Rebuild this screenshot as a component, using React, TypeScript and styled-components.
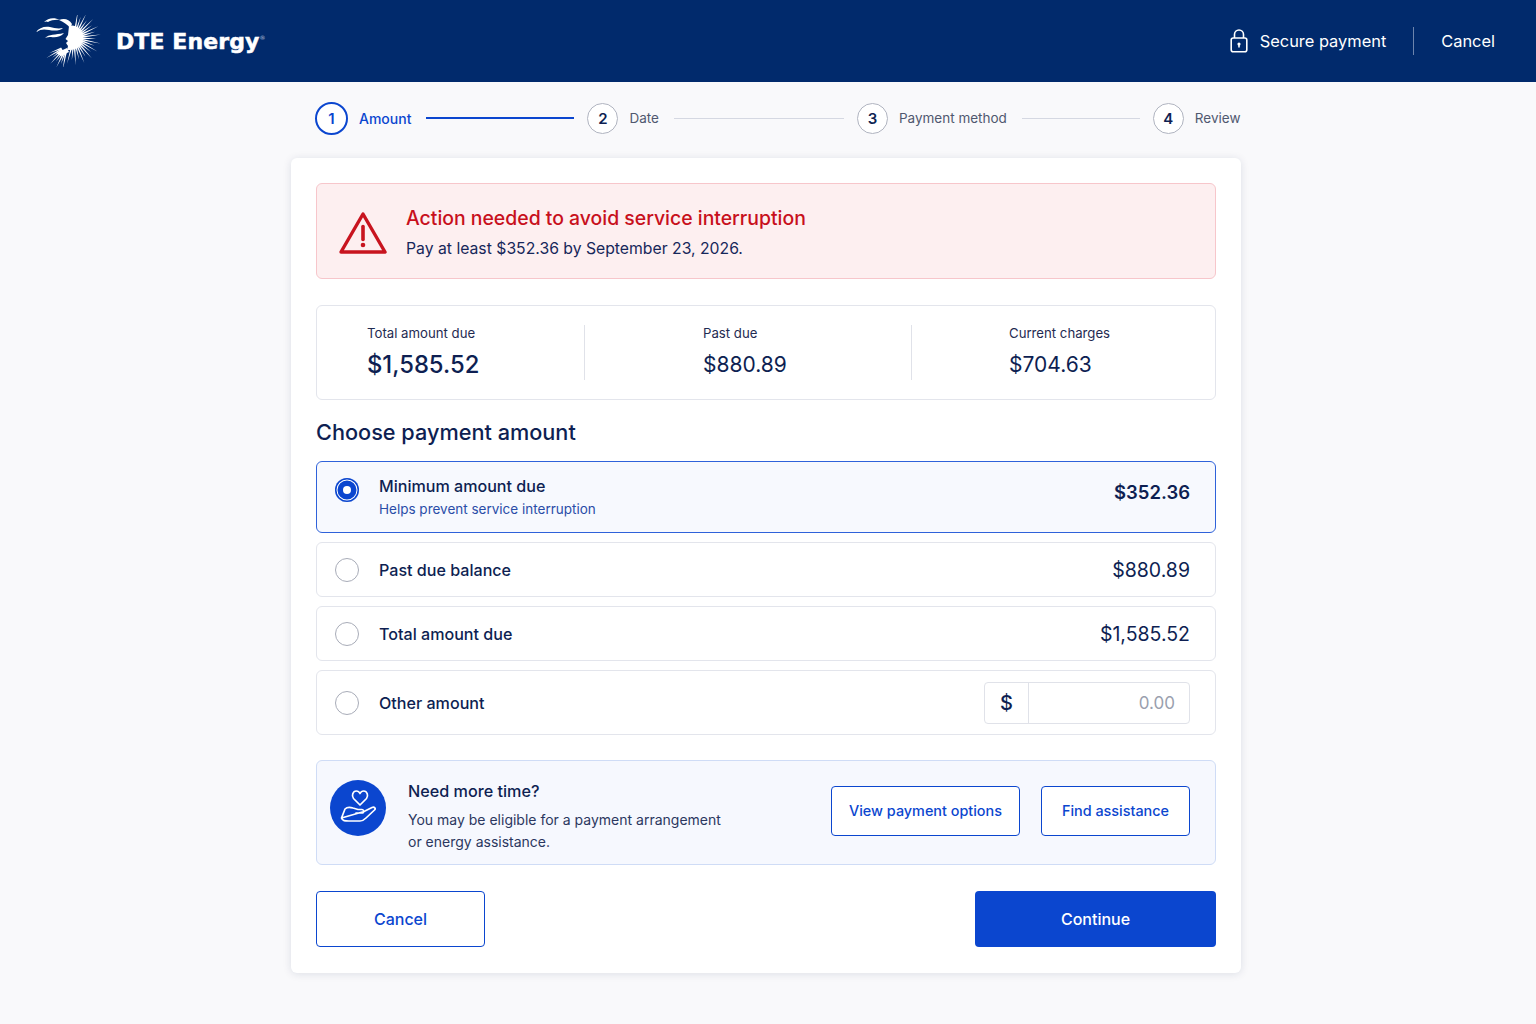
import React from "react";
import styled, { createGlobalStyle } from "styled-components";

const GlobalStyle = createGlobalStyle`
  html, body {
    margin: 0;
    padding: 0;
    background: #f9f9fb;
    font-family: "Inter", "Liberation Sans", sans-serif;
    color: #0e1f52;
  }
  * { box-sizing: border-box; }
`;

const Page = styled.div`
  width: 1536px;
  height: 1024px;
  overflow: hidden;
  display: flex;
  flex-direction: column;
  align-items: center;
`;

const Header = styled.header`
  width: 100%;
  height: 82px;
  flex: none;
  background: #012a6c;
  display: flex;
  align-items: center;
  justify-content: space-between;
  padding: 0 41px 0 36px;
  color: #fff;
`;

const Brand = styled.div`
  display: flex;
  align-items: center;
  gap: 13px;
`;

const BrandName = styled.span`
  font-family: "DejaVu Sans", sans-serif;
  font-weight: 700;
  font-size: 22px;
  letter-spacing: 0.1px;
  -webkit-text-stroke: 0.5px #fff;
  sup {
    font-size: 6px;
    font-weight: 400;
    -webkit-text-stroke: 0;
    color: #b8c4da;
    vertical-align: 9px;
    line-height: 0;
  }
`;

const HeaderActions = styled.div`
  display: flex;
  align-items: center;
  font-size: 16.4px;
`;

const SecureNote = styled.div`
  display: flex;
  align-items: center;
  gap: 12px;
  padding-right: 27px;
  border-right: 1px solid #6c84ad;
  height: 28px;
`;

const HeaderCancel = styled.span`
  padding-left: 27px;
`;

const Stepper = styled.nav`
  width: 924px;
  height: 72px;
  flex: none;
  margin: 0 0 4px 18px;
  display: flex;
  align-items: center;
`;

const StepCircle = styled.span<{ $active?: boolean }>`
  flex: none;
  width: ${p => (p.$active ? 33 : 31)}px;
  height: ${p => (p.$active ? 33 : 31)}px;
  border-radius: 50%;
  border: ${p => (p.$active ? "2px solid #0b46cf" : "1.5px solid #b0b4c0")};
  color: ${p => (p.$active ? "#0b46cf" : "#0e1f52")};
  background: #fff;
  display: flex;
  align-items: center;
  justify-content: center;
  font-size: 15px;
  font-weight: 600;
`;

const StepLabel = styled.span<{ $active?: boolean }>`
  flex: none;
  margin-left: 11px;
  font-size: ${p => (p.$active ? 14 : 13.5)}px;
  font-weight: ${p => (p.$active ? 500 : 400)};
  color: ${p => (p.$active ? "#0b46cf" : "#50586f")};
`;

const StepLine = styled.span<{ $active?: boolean; $width: number }>`
  flex: none;
  width: ${p => p.$width}px;
  height: ${p => (p.$active ? 1.5 : 1)}px;
  margin: 0 13px 0 15px;
  background: ${p => (p.$active ? "#0b46cf" : "#d5d8e2")};
`;

const Card = styled.main`
  width: 950px;
  height: 815px;
  flex: none;
  margin-right: 4px;
  background: #fff;
  border-radius: 6px;
  box-shadow: 0 1px 8px rgba(20, 30, 70, 0.12);
  padding: 25px;
  display: flex;
  flex-direction: column;
`;

const Alert = styled.section`
  height: 96px;
  flex: none;
  display: flex;
  align-items: center;
  gap: 19px;
  padding: 3px 22px 0;
  background: #fdeff0;
  border: 1px solid #f7c6cb;
  border-radius: 6px;
`;

const AlertText = styled.div`
  display: flex;
  flex-direction: column;
  gap: 9px;
`;

const AlertTitle = styled.div`
  color: #c8101c;
  font-size: 19.4px;
  font-weight: 500;
  line-height: 24px;
`;

const AlertBody = styled.div`
  font-size: 15.75px;
  line-height: 20px;
  color: #17275a;
`;

const Summary = styled.section`
  margin-top: 26px;
  height: 95px;
  flex: none;
  display: grid;
  grid-template-columns: 268px 327px 1fr;
  align-items: center;
  border: 1px solid #e3e5ec;
  border-radius: 6px;
`;

const SummaryCell = styled.div<{ $inset: number; $divider?: boolean }>`
  height: 55px;
  padding-left: ${p => p.$inset}px;
  border-right: ${p => (p.$divider ? "1px solid #e0e2e9" : "none")};
  display: flex;
  flex-direction: column;
  justify-content: space-between;
`;

const SummaryLabel = styled.div`
  font-size: 13.2px;
  line-height: 17px;
  color: #1f2b52;
`;

const SummaryValue = styled.div<{ $large?: boolean }>`
  font-size: ${p => (p.$large ? 23.8 : 21)}px;
  font-weight: ${p => (p.$large ? 500 : 400)};
  line-height: 30px;
  color: #0e1f52;
`;

const Heading = styled.h2`
  margin: 19px 0 15px;
  font-size: 21.7px;
  font-weight: 500;
  line-height: 27px;
  color: #0e1f52;
`;

const Options = styled.div`
  display: flex;
  flex-direction: column;
  gap: 9px;
`;

const Option = styled.label<{ $height: number; $selected?: boolean }>`
  height: ${p => p.$height}px;
  display: flex;
  align-items: center;
  padding: 0 25px 0 18px;
  border-radius: 6px;
  border: 1px solid ${p => (p.$selected ? "#2f62da" : "#e3e5ec")};
  background: ${p => (p.$selected ? "#f7f9fe" : "#fff")};
`;

const Radio = styled.span<{ $selected?: boolean }>`
  flex: none;
  width: 24px;
  height: 24px;
  margin-right: 20px;
  margin-top: ${p => (p.$selected ? -14 : 0)}px;
  border-radius: 50%;
  background: ${p => (p.$selected ? "#0b46cf" : "#fff")};
  border: ${p => (p.$selected ? "none" : "1.5px solid #a8acb8")};
  display: flex;
  align-items: center;
  justify-content: center;
  box-shadow: ${p => (p.$selected ? "inset 0 0 0 1.5px #0b46cf, inset 0 0 0 2.5px #fff" : "none")};
  &::after {
    content: "";
    display: ${p => (p.$selected ? "block" : "none")};
    width: 8px;
    height: 8px;
    border-radius: 50%;
    background: #fff;
  }
`;

const OptionText = styled.div`
  flex: 1;
`;

const OptionName = styled.div`
  font-size: 16.1px;
  font-weight: 500;
  line-height: 20px;
  color: #0e1f52;
`;

const OptionHint = styled.div`
  margin-top: 4px;
  font-size: 13.5px;
  line-height: 18px;
  color: #2a4da8;
`;

const OptionAmount = styled.div<{ $strong?: boolean }>`
  margin-top: ${p => (p.$strong ? -10 : 0)}px;
  font-size: ${p => (p.$strong ? 18.5 : 19.5)}px;
  font-weight: ${p => (p.$strong ? 600 : 400)};
  color: #0e1f52;
`;

const AmountField = styled.div`
  width: 206px;
  height: 42px;
  display: flex;
  border: 1px solid #e0e2e9;
  border-radius: 4px;
`;

const AmountPrefix = styled.span`
  width: 44px;
  flex: none;
  display: flex;
  align-items: center;
  justify-content: center;
  border-right: 1px solid #e0e2e9;
  font-size: 20px;
  font-weight: 500;
  color: #0e1f52;
`;

const AmountInput = styled.span`
  flex: 1;
  display: flex;
  align-items: center;
  justify-content: flex-end;
  padding-right: 14px;
  font-size: 17px;
  color: #9a9fae;
`;

const HelpBox = styled.section`
  margin-top: 25px;
  height: 105px;
  flex: none;
  display: flex;
  align-items: center;
  padding: 0 25px 0 13px;
  background: #f6f8fe;
  border: 1px solid #cfdcf6;
  border-radius: 6px;
`;

const HelpIcon = styled.span`
  flex: none;
  width: 56px;
  height: 56px;
  margin-top: -10px;
  border-radius: 50%;
  background: #0b46cf;
  display: flex;
  align-items: center;
  justify-content: center;
`;

const HelpText = styled.div`
  flex: 1;
  margin-left: 22px;
  padding-top: 8px;
`;

const HelpTitle = styled.div`
  font-size: 16.2px;
  font-weight: 500;
  line-height: 20px;
  margin-bottom: 8px;
  color: #0e1f52;
`;

const HelpBody = styled.div`
  font-size: 14px;
  line-height: 22px;
  color: #2b3760;
`;

const OutlineButton = styled.button<{ $width: number; $height: number; $size: number }>`
  width: ${p => p.$width}px;
  height: ${p => p.$height}px;
  flex: none;
  background: #fff;
  border: 1px solid #0b46cf;
  border-radius: 4px;
  color: #0b46cf;
  font-family: inherit;
  font-size: ${p => p.$size}px;
  font-weight: 500;
  padding: 0;
`;

const HelpActions = styled.div`
  display: flex;
  gap: 21px;
  margin-top: -4px;
`;

const Footer = styled.footer`
  margin-top: 26px;
  display: flex;
  justify-content: space-between;
`;

const PrimaryButton = styled.button`
  width: 241px;
  height: 56px;
  background: #0b46cf;
  border: none;
  border-radius: 4px;
  color: #fff;
  font-family: inherit;
  font-size: 16px;
  font-weight: 500;
  padding: 0;
`;

// sun rays of the logo, fanned around a centre
const fan = (cx: number, cy: number, from: number, to: number, count: number, long: number, short: number, inner: number) =>
  Array.from({ length: count }, (_, i) => {
    const a = ((from + (i * (to - from)) / (count - 1)) * Math.PI) / 180;
    const len = i % 2 === 0 ? long : short;
    const perp = a + Math.PI / 2;
    const w = 0.95;
    const x0 = cx + inner * Math.cos(a);
    const y0 = cy + inner * Math.sin(a);
    return [
      [x0 + w * Math.cos(perp), y0 + w * Math.sin(perp)],
      [cx + len * Math.cos(a), cy + len * Math.sin(a)],
      [x0 - w * Math.cos(perp), y0 - w * Math.sin(perp)],
    ]
      .map(pt => pt.map(n => n.toFixed(1)).join(","))
      .join(" ");
  });

const rays = [...fan(38, 23, -82, 105, 21, 27, 22, 7), ...fan(31, 31, 100, 158, 8, 24, 19, 6)];

const BrandMark = () => (
  <svg width="67" height="52" viewBox="0 0 67 52" fill="#fff">
    {rays.map(points => (
      <polygon key={points} points={points} />
    ))}
    <path d="M33 11 C40 9 47 15 47 22 C47 30 41 36 31 35 L32 31 L30 28 L32 26 L29.5 24 L32 20 Z" />
    <path d="M31 33 L20 38 L25 41 L33 37 Z" />
    <path d="M8 7 C12 3 18 2 24 5 C20 4.5 15 5 12 7 C11 6 9 6.5 8 7 Z" />
    <path d="M23 5 C28 3 33 4 36 9 L34 13 C32 10 28 7 23 5 Z" />
    <path d="M0 17 C3 13 8 11 14 12 C18 13 22 14 27 13 C24 16 18 16 13 15 C8 14 5 14 0 17 Z" />
    <path d="M9 23 C13 19 19 20 28 18 C25 22 19 23 15 22 C13 22 11 22 9 23 Z" />
  </svg>
);

const LockIcon = () => (
  <svg width="18" height="24" viewBox="0 0 18 24" fill="none" stroke="#fff" strokeWidth="1.6">
    <rect x="1.2" y="9" width="15.6" height="13.8" rx="2" />
    <path d="M4.5 9V5.5a4.5 4.5 0 0 1 9 0V9" />
    <circle cx="9" cy="15" r="1.6" fill="#fff" stroke="none" />
    <path d="M9 15v3.4" />
  </svg>
);

const WarningIcon = () => (
  <svg width="48" height="44" viewBox="0 0 48 44" fill="none">
    <path
      d="M24 3 L46 41 H2 Z"
      stroke="#c8141f"
      strokeWidth="3.4"
      strokeLinejoin="round"
    />
    <path d="M24 15.5v13" stroke="#c8141f" strokeWidth="3.6" strokeLinecap="round" />
    <circle cx="24" cy="34" r="2.3" fill="#c8141f" />
  </svg>
);

const HandHeartIcon = () => (
  <svg width="36" height="36" viewBox="0 0 36 36" fill="none" stroke="#fff" strokeWidth="1.7" strokeLinejoin="round" strokeLinecap="round">
    <path d="M20 15 L13.5 8.5 C11.3 6 12.8 1 16.3 1 C18 1 19.3 2 20 3.5 C20.7 2 22 1 23.7 1 C27.2 1 28.7 6 26.5 8.5 Z" />
    <path d="M1.5 28 L5 19 C7 17 10 17 13 18 L18 19.5 H22 C24 19.5 24.5 23 22 23 H16 M24 21.5 L32 17.5 C34.5 16.5 36 18.5 34.5 20 L26 28 C24 30 22 31 20 31 H9 C5 31 2.5 31 1.5 28 Z" />
  </svg>
);

const App: React.FC = () => (
  <Page>
    <GlobalStyle />
    <Header>
      <Brand>
        <BrandMark />
        <BrandName>
          DTE Energy<sup>®</sup>
        </BrandName>
      </Brand>
      <HeaderActions>
        <SecureNote>
          <LockIcon />
          Secure payment
        </SecureNote>
        <HeaderCancel>Cancel</HeaderCancel>
      </HeaderActions>
    </Header>

    <Stepper>
      <StepCircle $active>1</StepCircle>
      <StepLabel $active>Amount</StepLabel>
      <StepLine $active $width={148} />
      <StepCircle>2</StepCircle>
      <StepLabel>Date</StepLabel>
      <StepLine $width={170} />
      <StepCircle>3</StepCircle>
      <StepLabel>Payment method</StepLabel>
      <StepLine $width={118} />
      <StepCircle>4</StepCircle>
      <StepLabel>Review</StepLabel>
    </Stepper>

    <Card>
      <Alert>
        <WarningIcon />
        <AlertText>
          <AlertTitle>Action needed to avoid service interruption</AlertTitle>
          <AlertBody>Pay at least $352.36 by September 23, 2026.</AlertBody>
        </AlertText>
      </Alert>

      <Summary>
        <SummaryCell $inset={50} $divider>
          <SummaryLabel>Total amount due</SummaryLabel>
          <SummaryValue $large>$1,585.52</SummaryValue>
        </SummaryCell>
        <SummaryCell $inset={118} $divider>
          <SummaryLabel>Past due</SummaryLabel>
          <SummaryValue>$880.89</SummaryValue>
        </SummaryCell>
        <SummaryCell $inset={97}>
          <SummaryLabel>Current charges</SummaryLabel>
          <SummaryValue>$704.63</SummaryValue>
        </SummaryCell>
      </Summary>

      <Heading>Choose payment amount</Heading>

      <Options>
        <Option $height={72} $selected>
          <Radio $selected />
          <OptionText>
            <OptionName>Minimum amount due</OptionName>
            <OptionHint>Helps prevent service interruption</OptionHint>
          </OptionText>
          <OptionAmount $strong>$352.36</OptionAmount>
        </Option>
        <Option $height={55}>
          <Radio />
          <OptionText>
            <OptionName>Past due balance</OptionName>
          </OptionText>
          <OptionAmount>$880.89</OptionAmount>
        </Option>
        <Option $height={55}>
          <Radio />
          <OptionText>
            <OptionName>Total amount due</OptionName>
          </OptionText>
          <OptionAmount>$1,585.52</OptionAmount>
        </Option>
        <Option $height={65}>
          <Radio />
          <OptionText>
            <OptionName>Other amount</OptionName>
          </OptionText>
          <AmountField>
            <AmountPrefix>$</AmountPrefix>
            <AmountInput>0.00</AmountInput>
          </AmountField>
        </Option>
      </Options>

      <HelpBox>
        <HelpIcon>
          <HandHeartIcon />
        </HelpIcon>
        <HelpText>
          <HelpTitle>Need more time?</HelpTitle>
          <HelpBody>
            You may be eligible for a payment arrangement
            <br />
            or energy assistance.
          </HelpBody>
        </HelpText>
        <HelpActions>
          <OutlineButton $width={189} $height={50} $size={14.4}>View payment options</OutlineButton>
          <OutlineButton $width={149} $height={50} $size={14.4}>Find assistance</OutlineButton>
        </HelpActions>
      </HelpBox>

      <Footer>
        <OutlineButton $width={169} $height={56} $size={16}>Cancel</OutlineButton>
        <PrimaryButton>Continue</PrimaryButton>
      </Footer>
    </Card>
  </Page>
);

export default App;
